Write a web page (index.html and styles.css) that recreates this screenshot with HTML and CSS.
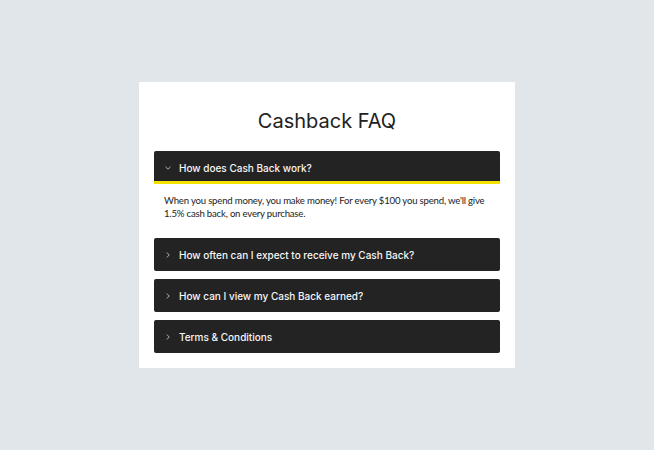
FILE: index.html
```html
<!DOCTYPE html>
<html lang="en">
<head>
<meta charset="utf-8">
<title>Cashback FAQ</title>
<link rel="stylesheet" href="styles.css">
</head>
<body>
<main class="card">
  <h1 class="title">Cashback FAQ</h1>
  <div class="faq">
    <div class="item open">
      <div class="head">
        <svg class="chev" width="8" height="8" viewBox="0 0 8 8"><path d="M1.5 2.8 L4 5.2 L6.5 2.8" fill="none" stroke="#bdbdbd" stroke-width="0.9"/></svg>
        <span>How does Cash Back work?</span>
      </div>
      <div class="answer">When you spend money, you make money! For every $100 you spend, we'll give 1.5% cash back, on every purchase.</div>
    </div>
    <div class="item">
      <div class="head">
        <svg class="chev" width="8" height="8" viewBox="0 0 8 8"><path d="M2.8 1.5 L5.2 4 L2.8 6.5" fill="none" stroke="#bdbdbd" stroke-width="0.9"/></svg>
        <span>How often can I expect to receive my Cash Back?</span>
      </div>
    </div>
    <div class="item">
      <div class="head">
        <svg class="chev" width="8" height="8" viewBox="0 0 8 8"><path d="M2.8 1.5 L5.2 4 L2.8 6.5" fill="none" stroke="#bdbdbd" stroke-width="0.9"/></svg>
        <span>How can I view my Cash Back earned?</span>
      </div>
    </div>
    <div class="item">
      <div class="head">
        <svg class="chev" width="8" height="8" viewBox="0 0 8 8"><path d="M2.8 1.5 L5.2 4 L2.8 6.5" fill="none" stroke="#bdbdbd" stroke-width="0.9"/></svg>
        <span>Terms &amp; Conditions</span>
      </div>
    </div>
  </div>
</main>
</body>
</html>
```
FILE: styles.css
```css
html, body {
  margin: 0;
  padding: 0;
}
body {
  background: #e1e6ea;
  min-height: 100vh;
  display: flex;
  align-items: center;
  justify-content: center;
  font-family: Inter, "Liberation Sans", sans-serif;
}
.card {
  width: 376px;
  box-sizing: border-box;
  background: #ffffff;
  padding: 0 15px 15px;
}
.title {
  margin: 24px 0 15px;
  font-size: 20px;
  line-height: 30px;
  font-weight: 400;
  text-align: center;
  color: #222;
}
.faq {
  display: flex;
  flex-direction: column;
  gap: 8px;
}
.head {
  height: 33px;
  box-sizing: border-box;
  background: #232323;
  border-radius: 2px;
  display: flex;
  align-items: center;
  gap: 7px;
  padding: 0 10px;
  color: #f6f6f6;
  font-size: 10px;
  font-weight: 500;
}
.open .head {
  border-radius: 2px 2px 0 0;
  border-bottom: 3px solid #f5e100;
  padding-top: 3px;
}
.chev {
  flex: none;
}
.answer {
  padding: 10px 10px 10px;
  font-family: Lato, "Open Sans", sans-serif;
  font-size: 9.6px;
  letter-spacing: -0.2px;
  line-height: 13px;
  color: #222;
}
```
